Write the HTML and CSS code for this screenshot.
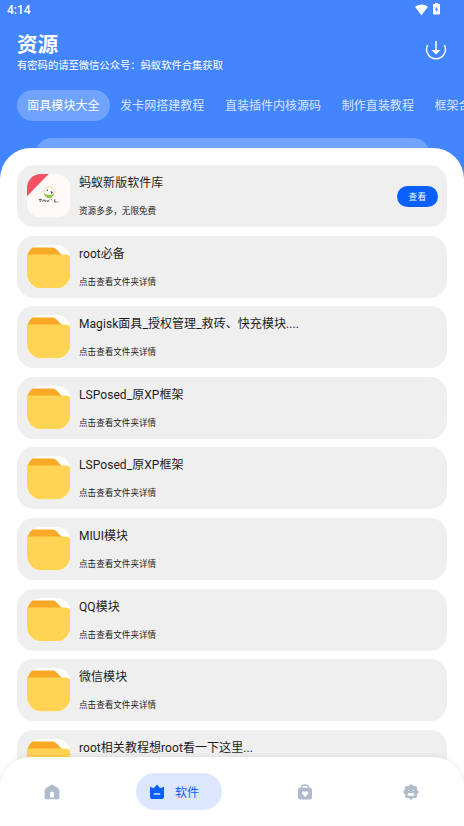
FILE: index.html
```html
<!DOCTYPE html>
<html lang="zh-CN">
<head>
<meta charset="utf-8">
<meta name="viewport" content="width=device-width, initial-scale=1">
<title>资源</title>
<link rel="stylesheet" href="styles.css">
</head>
<body>
<svg class="defs" aria-hidden="true">
  <symbol id="folder" viewBox="0 0 44 44">
    <rect width="44" height="44" rx="14" fill="#fff"/>
    <path d="M.5 14V9.500Q2 5 5.500 2.500H26Q28.500 2.500 30 4.500L37 12V14Z" fill="#f8a925"/>
    <path d="M0 11Q.5 9.500 2 9.500H39Q44 9.500 44 14V29A15 15 0 0 1 29 44H15A15 15 0 0 1 0 29Z" fill="#ffd455"/>
  </symbol>
</svg>
<div class="app">
  <div class="status">
    <span class="clock">4:14</span>
    <svg class="wifi" viewBox="0 0 13 12"><path d="M0 2.800Q6.500-1.800 13 2.800L6.500 11.300Z" fill="#fff"/></svg>
    <svg class="battery" viewBox="0 0 7 12"><path d="M2 0H5V1H6.300Q7 1 7 2V10.500Q7 11.500 6 11.500H1Q0 11.500 0 10.500V2Q0 1 .7 1H2Z" fill="#fff"/><path d="M4 3.200L2 6.800H3.200V9.300L5.200 5.700H4Z" fill="#4285ff"/></svg>
  </div>
  <header class="header">
    <div>
      <h1 class="title">资源</h1>
      <p class="subtitle">有密码的请至微信公众号：蚂蚁软件合集获取</p>
    </div>
    <svg class="download" viewBox="0 0 22 22" fill="none" stroke="#fff"><path d="M2.600 5.200A9.400 9.400 0 1 0 19.400 5.200" stroke-width="1.500"/><path d="M11 1V12" stroke-width="1.500"/><path d="M6.500 10H15.500L11 14.500Z" fill="#fff" stroke="none"/></svg>
  </header>
  <nav class="tabs">
    <a class="tab active">面具模块大全</a>
    <a class="tab">发卡网搭建教程</a>
    <a class="tab">直装插件内核源码</a>
    <a class="tab">制作直装教程</a>
    <a class="tab">框架合集</a>
  </nav>
  <div class="search"></div>
  <main class="sheet">
    <article class="card">
      <svg class="icon" viewBox="0 0 44 44">
        <clipPath id="round"><rect width="44" height="44" rx="14"/></clipPath>
        <g clip-path="url(#round)">
          <rect width="44" height="44" fill="#fffaf8"/>
          <path d="M0 0H22L0 22.500Z" fill="#f65064"/>
          <circle cx="22.500" cy="18" r="5" fill="#fff" stroke="#f5bd78" stroke-width="1" stroke-dasharray="2 1"/>
          <path d="M17 19Q20 23 27.500 20Q26 24.500 22 24.500Q18 24 17 19Z" fill="#8cc63f"/>
          <circle cx="20.500" cy="16.500" r=".8" fill="#444"/><path d="M24 17L26.500 18.500L24.500 20.500Z" fill="#376b91"/>
          <path d="M12 25.700H15M13.300 25.700V28.500M16 28V26.500H18.500V28.500M20 26.500L21 28.300L22.500 26M24 26H25M28 25.500V28.300H30M31 28.300H32" fill="none" stroke="#333" stroke-width=".8"/>
        </g>
      </svg>
      <div class="info"><h2 class="name">蚂蚁新版软件库</h2><p class="desc">资源多多，无限免费</p></div>
      <button class="view">查看</button>
    </article>
    <article class="card"><svg class="icon"><use href="#folder"/></svg><div class="info"><h2 class="name">root必备</h2><p class="desc">点击查看文件夹详情</p></div></article>
    <article class="card"><svg class="icon"><use href="#folder"/></svg><div class="info"><h2 class="name">Magisk面具_授权管理_救砖、快充模块....</h2><p class="desc">点击查看文件夹详情</p></div></article>
    <article class="card"><svg class="icon"><use href="#folder"/></svg><div class="info"><h2 class="name">LSPosed_原XP框架</h2><p class="desc">点击查看文件夹详情</p></div></article>
    <article class="card"><svg class="icon"><use href="#folder"/></svg><div class="info"><h2 class="name">LSPosed_原XP框架</h2><p class="desc">点击查看文件夹详情</p></div></article>
    <article class="card"><svg class="icon"><use href="#folder"/></svg><div class="info"><h2 class="name">MIUI模块</h2><p class="desc">点击查看文件夹详情</p></div></article>
    <article class="card"><svg class="icon"><use href="#folder"/></svg><div class="info"><h2 class="name">QQ模块</h2><p class="desc">点击查看文件夹详情</p></div></article>
    <article class="card"><svg class="icon"><use href="#folder"/></svg><div class="info"><h2 class="name">微信模块</h2><p class="desc">点击查看文件夹详情</p></div></article>
    <article class="card"><svg class="icon"><use href="#folder"/></svg><div class="info"><h2 class="name">root相关教程想root看一下这里...</h2></div></article>
  </main>
  <nav class="bottom">
    <a class="item"><svg class="glyph" viewBox="0 0 16 16"><path fill-rule="evenodd" d="M8 .6L14 4Q15.400 5 15.400 6.500V13.500Q15.400 15.300 13.600 15.300H2.400Q.6 15.300 .6 13.500V6.500Q.6 5 2 4ZM6 13.500H10V9.500Q10 7.500 8 7.500T6 9.500Z" fill="#b0bacb"/></svg></a>
    <a class="item current"><svg class="glyph" viewBox="0 0 16 16"><path d="M1 2.500Q3.500 4 5 4L8 .5L11 4Q12.500 4 15 2.500V13Q15 15 13 15H3Q1 15 1 13Z" fill="#0a60ff"/><path d="M5.200 10H10.800" stroke="#dce7ff" stroke-width="1.300" stroke-linecap="round"/></svg><span>软件</span></a>
    <a class="item"><svg class="glyph" viewBox="0 0 16 16"><path d="M4.500 5V4Q4.500 1 8 1T11.500 4V5" fill="none" stroke="#b0bacb" stroke-width="1.500"/><rect x="1" y="3.800" width="14" height="11.700" rx="2.300" fill="#b0bacb"/><path d="M8 13L5.200 10Q4.200 8 6 7.300Q7.400 7 8 8.300Q8.600 7 10 7.300Q11.800 8 10.800 10Z" fill="#fff"/></svg></a>
    <a class="item"><svg class="glyph" viewBox="0 0 16 16"><path d="M8 .4L10.200 2.200L13.400 2.600L13.800 5.800L15.600 8L13.800 10.200L13.400 13.400L10.200 13.800L8 15.600L5.800 13.800L2.600 13.400L2.200 10.200L.4 8L2.200 5.800L2.600 2.600L5.800 2.200Z" fill="#b0bacb" stroke="#b0bacb" stroke-linejoin="round" stroke-width=".7"/><path d="M4.500 11.700Q4.500 9.200 6 8.700L8 9.400L10 8.700Q11.500 9.200 11.500 11.700Z" fill="#fff"/><path d="M5 6.700L6.300 6.200M9.700 6.200L11 6.700" stroke="#fff" stroke-width="1"/></svg></a>
  </nav>
</div>
</body>
</html>
```
FILE: styles.css
```css
* { box-sizing: border-box; margin: 0; padding: 0; }
body { font-family: Roboto, "Noto Sans CJK SC", sans-serif; background: #4285ff; overflow: hidden; }
.defs { display: none; }
.app { height: 826px; display: flex; flex-direction: column; overflow: hidden; }

.status { flex: none; height: 21px; display: flex; align-items: flex-start; padding: 4px 24px 0 7px; color: #fff; }
.clock { font-size: 12px; font-weight: 500; line-height: 13px; margin-right: auto; }
.wifi { width: 13px; height: 12px; }
.battery { width: 7px; height: 12px; margin: -1px 0 0 5px; }

.header { flex: none; height: 68.500px; padding: 11px 17px 0 17px; display: flex; justify-content: space-between; color: #fff; }
.title { font-size: 20.600px; font-weight: 700; line-height: 26px; }
.subtitle { font-size: 10.300px; line-height: 15px; white-space: nowrap; }
.download { width: 22px; height: 22px; margin-top: 8px; }

.tabs { flex: none; display: flex; height: 31px; padding-left: 17px; overflow: hidden; }
.tab { flex: none; padding: 1px 10.300px 0; line-height: 31px; font-size: 12px; letter-spacing: .03px; color: rgba(255,255,255,.8); white-space: nowrap; border-radius: 16px; }
.tab.active { background: #70a2ff; color: #fff; }

.search { flex: none; height: 34px; margin: 17px 34.500px 0; border-radius: 17px; background: #70a2ff; }
.sheet { flex: 1; min-height: 0; margin-top: -23.500px; padding: 17px 17px 0; background: #fff; border-radius: 31px 31px 0 0; display: flex; flex-direction: column; gap: 8.600px; overflow: hidden; position: relative; }
.card { flex: none; height: 62px; display: flex; padding: 9px 9px 0 9.500px; background: #efefef; border-radius: 17px; }
.icon { flex: none; width: 43.500px; height: 43.500px; }
.info { flex: 1; padding-left: 9px; color: #1c1c1c; }
.name { font-size: 12px; font-weight: 400; line-height: 16px; padding-top: 1px; letter-spacing: .06px; white-space: nowrap; }
.desc { font-size: 8.570px; line-height: 12px; margin-top: 14px; }
.view { width: 41px; height: 21px; margin-top: 12px; border: 0; border-radius: 11px; background: #0a60ff; color: #fff; font: 400 8.600px/22px Roboto, "Noto Sans CJK SC", sans-serif; letter-spacing: .4px; }

.bottom { flex: none; height: 69px; margin-top: -69px; display: grid; grid-template-columns: 92px 161px 106px 61px; align-items: center; padding-left: 44px; background: #fff; border-radius: 31px 31px 0 0; box-shadow: 0 0 7px rgba(0,0,0,.1); position: relative; }
.item { display: flex; align-items: center; }
.glyph { width: 16px; height: 16px; }
.current { width: 86px; height: 37px; padding-left: 13px; gap: 10px; border-radius: 19px; background: #dce7ff; color: #0a60ff; font-size: 12px; }
```
